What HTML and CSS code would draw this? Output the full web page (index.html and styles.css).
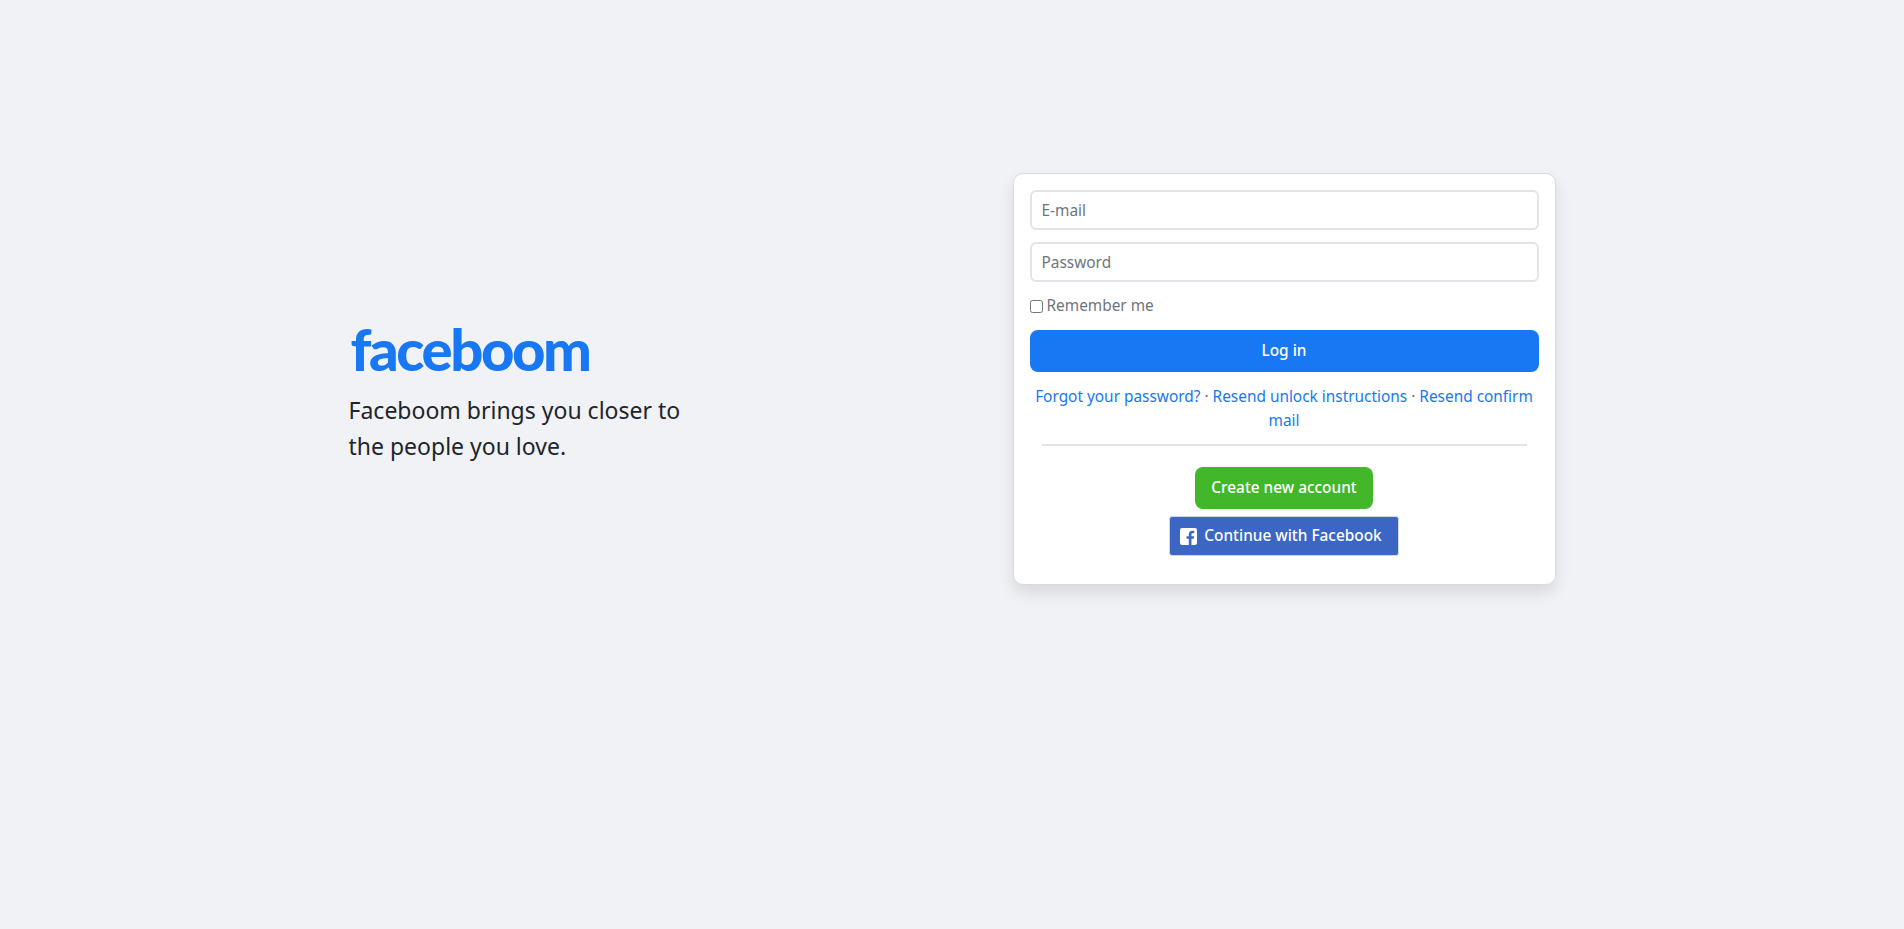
FILE: index.html
```html
<!DOCTYPE html>
<html lang="en">

<head>
    <meta charset="utf-8">
    <title>Faceboom</title>
    <link rel="stylesheet" href="styles.css">
</head>

<body>
    <div class="login-page">
        <div class="intro">
            <h1 class="logo">faceboom</h1>
            <p class="tagline">Faceboom brings you closer to the people you love.</p>
        </div>

        <div class="login-card">
            <form class="login-form">
                <input class="text-input" type="email" placeholder="E-mail" />
                <input class="text-input" type="password" placeholder="Password" />
                <label class="remember"><input type="checkbox" /> Remember me</label>
                <button class="btn-login" type="button">Log in</button>
            </form>

            <p class="links">
                <a href="#">Forgot your password?</a> <span class="dot">·</span>
                <a href="#">Resend unlock instructions</a> <span class="dot">·</span>
                <a href="#">Resend confirm mail</a>
            </p>
            <hr class="divider">

            <div class="actions">
                <a class="btn-create" href="#">Create new account</a>
                <a class="btn-facebook" href="#">
                    <svg class="fb-icon" viewBox="0 0 16 16" width="17" height="17" aria-hidden="true">
                        <path fill="#fff" d="M2 0h12a2 2 0 0 1 2 2v12a2 2 0 0 1-2 2h-3.2v-5.8h2.1l.4-2.5h-2.5V6.2c0-.8.3-1.3 1.4-1.3h1.2V2.700c-.5-.1-1.100-.1-1.800-.1-2 0-3.300 1.200-3.300 3.400v1.700H6.200v2.500h2.100V16H2a2 2 0 0 1-2-2V2a2 2 0 0 1 2-2z"/>
                    </svg>
                    Continue with Facebook
                </a>
            </div>
        </div>
    </div>
</body>

</html>
```

FILE: styles.css
```css
:root {
    --blue: #1877f2;
    --green: #42b72a;
    --bg-color: #f0f2f5;
    --font-color: #212529;
}

* {
    box-sizing: border-box;
}

body {
    font-family: 'Noto Sans', 'Open Sans', sans-serif;
    font-size: 15.4px;
    line-height: 24px;
    margin: 0;
    min-height: 929px;
    background-color: var(--bg-color);
    color: var(--font-color);
}

.login-page {
    display: flex;
    justify-content: space-between;
    align-items: center;
    width: 1207px;
    margin: 0 auto;
    padding-top: 173px;
}

.intro {
    width: 340px;
    margin-top: 23px;
}

.logo {
    margin: 0 0 11px 2px;
    font-family: 'Lato', 'Noto Sans', sans-serif;
    font-size: 58px;
    line-height: 64px;
    font-weight: 900;
    letter-spacing: -2.4px;
    color: var(--blue);
}

.tagline {
    margin: 0;
    font-size: 23px;
    line-height: 36px;
}

.login-card {
    width: 543px;
    height: 412px;
    padding: 16px;
    background-color: #fff;
    border: 1px solid #d8dade;
    border-radius: 10px;
    box-shadow: 0 8px 16px rgba(0, 0, 0, 0.1);
}

.login-form {
    display: flex;
    flex-direction: column;
}

.text-input {
    height: 40px;
    margin-bottom: 12px;
    padding: 6px 10px;
    font: inherit;
    border: 2px solid #e2e4e8;
    border-radius: 6px;
}

.text-input::placeholder {
    color: #6c757d;
}

.remember {
    display: flex;
    align-items: center;
    gap: 4px;
    height: 24px;
    margin-bottom: 12px;
    color: #6c757d;
}

.remember input {
    width: 13px;
    height: 13px;
    margin: 0;
}

.btn-login {
    height: 42px;
    font: inherit;
    font-weight: 500;
    color: #fff;
    background-color: var(--blue);
    border: none;
    border-radius: 8px;
}

.links {
    margin: 13px 0 0;
    text-align: center;
}

.links a {
    color: var(--blue);
    text-decoration: none;
}

.dot {
    color: #6c757d;
}

.divider {
    height: 2px;
    margin: 11px 12px 21px;
    background-color: #e2e4e8;
    border: none;
}

.actions {
    display: flex;
    flex-direction: column;
    align-items: center;
    gap: 7px;
}

.btn-create {
    display: block;
    height: 42px;
    padding: 9px 16px;
    font-weight: 500;
    color: #fff;
    text-decoration: none;
    background-color: var(--green);
    border-radius: 8px;
}

.btn-facebook {
    display: flex;
    align-items: center;
    gap: 7px;
    height: 40px;
    padding: 0 16px 0 10px;
    font-weight: 500;
    color: #fff;
    text-decoration: none;
    background-color: #3b66c4;
    border: 1px solid #d3d6e0;
    border-radius: 3px;
}

.fb-icon {
    flex-shrink: 0;
}
```
